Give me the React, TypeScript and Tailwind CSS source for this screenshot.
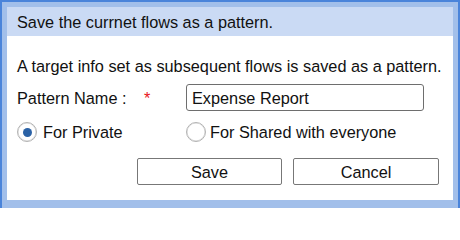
import React from "react";

function Radio({ checked }: { checked?: boolean }) {
  return (
    <span className="flex h-[20px] w-[20px] shrink-0 items-center justify-center rounded-full border border-[#b3b3b3] bg-white shadow-[inset_0_0_0_0.5px_#d0d0d0]">
      {checked ? <span className="h-[9px] w-[9px] rounded-full bg-[#2b62a6]" /> : null}
    </span>
  );
}

export default function App() {
  return (
    <div
      className="h-[208px] w-[460px] overflow-hidden border-x-2 border-t-2 border-[#4a84da] bg-[#a2bfea] px-[5px] pt-[5px] pb-[8px] text-[#111]"
      style={{ fontFamily: '"Liberation Sans", Arial, sans-serif' }}
    >
      <div className="flex h-full flex-col bg-white">
        <div className="flex h-[29px] items-center bg-[#cadaf4] pl-[10px] text-[16.3px] leading-[18px]">
          Save the currnet flows as a pattern.
        </div>
        <div className="flex flex-col pl-[10px] pr-[14px]">
          <div className="mt-[21px] h-[18px] text-[16.3px] leading-[18px] whitespace-nowrap">
            A target info set as subsequent flows is saved as a pattern.
          </div>
          <div className="mt-[9px] flex h-[27px] items-center text-[16.3px] leading-[18px]">
            <span className="w-[127px]">Pattern Name :</span>
            <span className="w-[42px] self-center text-[#e8151b]">*</span>
            <div className="flex h-[27px] w-[238px] items-center rounded-[3px] border border-[#6e6e6e] pl-[5px]">
              Expense Report
            </div>
          </div>
          <div className="mt-[11px] flex h-[20px] items-center text-[16.3px] leading-[18px]">
            <div className="flex w-[169px] items-center gap-[6px]">
              <Radio checked />
              <span>For Private</span>
            </div>
            <div className="flex items-center gap-[4px]">
              <Radio />
              <span>For Shared with everyone</span>
            </div>
          </div>
          <div className="mt-[16px] flex justify-end gap-[11px]">
            <button className="h-[27px] w-[145px] rounded-[2px] border border-[#777] bg-white text-[16.3px] leading-[18px] text-[#111]">
              Save
            </button>
            <button className="h-[27px] w-[146px] rounded-[2px] border border-[#777] bg-white text-[16.3px] leading-[18px] text-[#111]">
              Cancel
            </button>
          </div>
        </div>
      </div>
    </div>
  );
}
